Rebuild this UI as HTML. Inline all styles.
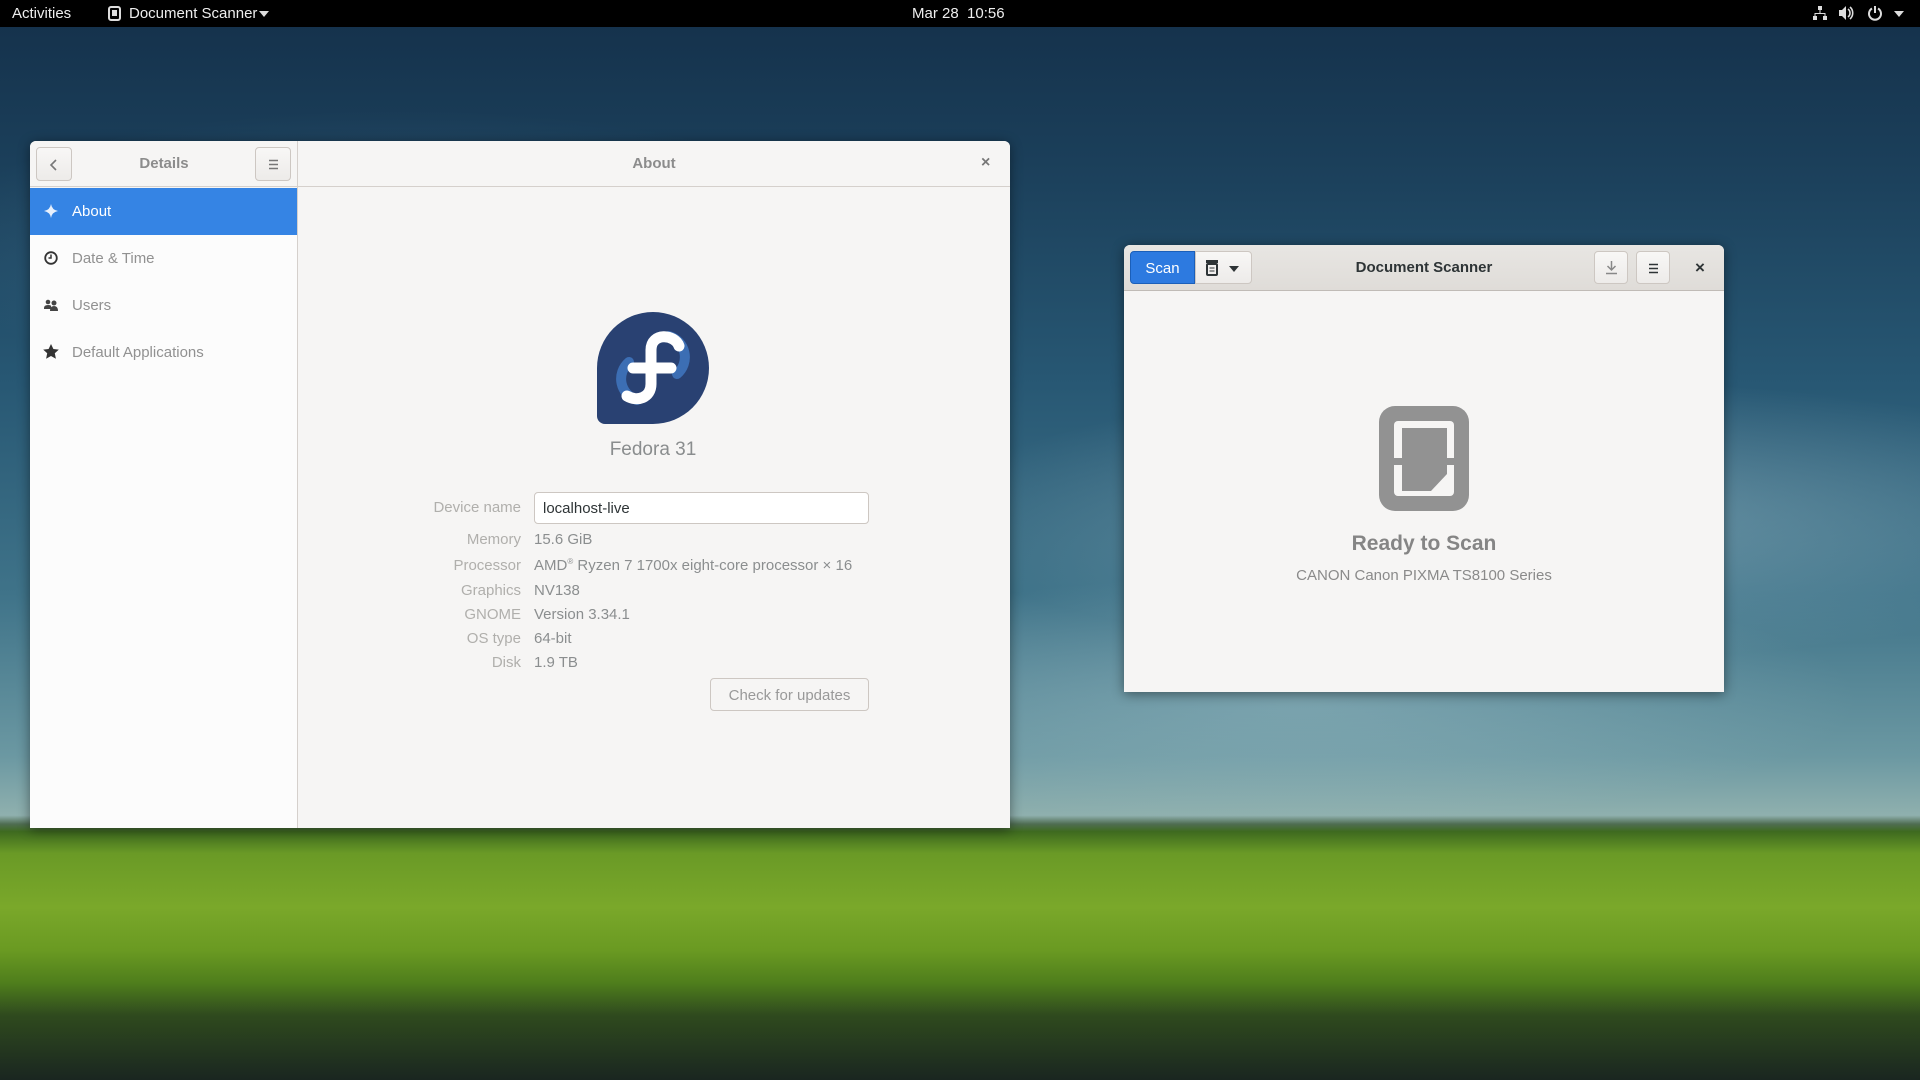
<!DOCTYPE html>
<html><head><meta charset="utf-8"><style>
*{box-sizing:border-box;margin:0;padding:0}
body{width:1920px;height:1080px;overflow:hidden;position:relative;font-family:"Liberation Sans","DejaVu Sans",sans-serif;
background:
radial-gradient(ellipse 900px 200px at 1550px 520px,rgba(200,225,230,.35),transparent 70%),
radial-gradient(ellipse 800px 180px at 1300px 700px,rgba(190,215,220,.3),transparent 70%),
radial-gradient(ellipse 700px 200px at 400px 250px,rgba(100,150,180,.25),transparent 70%),
linear-gradient(180deg,#14304a 0%,#1b3f5a 15%,#275773 35%,#3f7389 55%,#6b98a2 70%,#8fb0ae 75.5%,#4f6d52 76.3%,#3e6a1f 77%,#6a9a26 79%,#7aa82a 84%,#6a9a22 88%,#4f7e1c 91%,#2f4a1e 94%,#1a2620 100%);}
.bar{position:absolute;left:0;top:0;width:1920px;height:27px;background:#000;color:#eee;font-size:15px}
.bar span{position:absolute;top:5px}
.win{position:absolute;background:#f6f5f4;box-shadow:0 2px 12px rgba(0,0,0,.45);border-radius:6px 6px 0 0;overflow:hidden}
.btn{position:absolute;border:1px solid #cdc7c2;border-radius:4px;background:linear-gradient(#f8f7f6,#edebe9)}
.lbl{position:absolute;color:#b0afac;font-size:15px;text-align:right;width:200px;left:321px}
.val{position:absolute;color:#8b8e8f;font-size:15px;left:534px}
</style></head><body>
<div class="bar">
<span style="left:12px">Activities</span>
<svg style="position:absolute;left:108px;top:6px" width="13" height="15" viewBox="0 0 13 15"><rect x="1" y="1" width="11" height="13" rx="2" fill="none" stroke="#ddd" stroke-width="2"/><rect x="4" y="4" width="5" height="6" fill="#ddd"/></svg>
<span style="left:129px">Document Scanner</span>
<svg style="position:absolute;left:259px;top:11px" width="10" height="6"><path d="M0 0H10L5 6Z" fill="#ddd"/></svg>
<span style="left:912px">Mar 28&nbsp; 10:56</span>
<svg style="position:absolute;left:1812px;top:5px" width="16" height="16" viewBox="0 0 16 16" fill="#ddd"><rect x="6" y="1" width="4" height="4"/><rect x="1" y="11" width="4" height="4"/><rect x="11" y="11" width="4" height="4"/><path d="M7.5 5h1v3h5v3h-1V9h-9v2h-1V8h5z"/></svg>
<svg style="position:absolute;left:1838px;top:5px" width="18" height="16" viewBox="0 0 18 16" fill="#ddd"><path d="M1 5h3l4-4v14l-4-4H1z"/><path d="M10 4a5 5 0 0 1 0 8M12 2a8 8 0 0 1 0 12" stroke="#ddd" stroke-width="1.6" fill="none"/></svg>
<svg style="position:absolute;left:1867px;top:5px" width="16" height="16" viewBox="0 0 16 16"><path d="M5 3.5a6 6 0 1 0 6 0" stroke="#ddd" stroke-width="2" fill="none"/><path d="M8 1v7" stroke="#ddd" stroke-width="2"/></svg>
<svg style="position:absolute;left:1894px;top:11px" width="10" height="6"><path d="M0 0H10L5 6Z" fill="#ddd"/></svg>
</div>

<div class="win" style="left:30px;top:141px;width:980px;height:687px">
 <div style="position:absolute;left:0;top:0;width:980px;height:46px;background:#f6f5f4;border-bottom:1px solid #d5d0cc"></div>
 <div style="position:absolute;left:267px;top:0;width:1px;height:687px;background:#d5d0cc"></div>
 <div class="btn" style="left:6px;top:6px;width:36px;height:34px"><svg style="position:absolute;left:12px;top:10px" width="10" height="14"><path d="M7 2L2 7l5 5" stroke="#777" stroke-width="1.6" fill="none"/></svg></div>
 <div style="position:absolute;left:42px;width:184px;top:14px;text-align:center;font-size:15px;font-weight:bold;color:#8c8c8c">Details</div>
 <div class="btn" style="left:225px;top:6px;width:36px;height:34px"><svg style="position:absolute;left:12px;top:11px" width="11" height="11"><path d="M1 1.5h9M1 5.5h9M1 9.5h9" stroke="#777" stroke-width="1.5"/></svg></div>
 <div style="position:absolute;left:268px;width:712px;top:14px;text-align:center;font-size:15px;font-weight:bold;color:#8c8c8c">About</div>
 <div style="position:absolute;left:951px;top:13px;font-size:16px;color:#777;font-weight:bold">×</div>
 <div style="position:absolute;left:0;top:47px;width:267px;height:640px;background:#fcfcfc"></div>
 <div style="position:absolute;left:0;top:47px;width:267px;height:47px;background:#3584e4"></div>
 <svg style="position:absolute;left:14px;top:63px" width="14" height="14" viewBox="0 0 14 14"><path d="M7 0Q8 6 14 7Q8 8 7 14Q6 8 0 7Q6 6 7 0Z" fill="#e8f0fc"/></svg>
 <div style="position:absolute;left:42px;top:62px;font-size:15px;color:#fff">About</div>
 <svg style="position:absolute;left:14px;top:110px" width="14" height="14" viewBox="0 0 14 14"><circle cx="7" cy="7" r="5.8" stroke="#333" stroke-width="1.8" fill="none"/><path d="M7 3.5V7H4.5" stroke="#333" stroke-width="1.5" fill="none"/></svg>
 <div style="position:absolute;left:42px;top:109px;font-size:15px;color:#919191">Date &amp; Time</div>
 <svg style="position:absolute;left:14px;top:158px" width="15" height="12" viewBox="0 0 15 12" fill="#444"><circle cx="4" cy="3" r="2.3"/><circle cx="10" cy="4" r="2.5"/><path d="M0 9q0-3 4-3t3 2v2H0zM6 12q0-5 4-5t4 5z"/></svg>
 <div style="position:absolute;left:42px;top:156px;font-size:15px;color:#919191">Users</div>
 <svg style="position:absolute;left:13px;top:203px" width="16" height="15" viewBox="0 0 16 15"><path d="M8 0l2.4 5 5.4.6-4 3.7 1.1 5.4L8 12l-4.9 2.7 1.1-5.4-4-3.7L5.6 5z" fill="#333"/></svg>
 <div style="position:absolute;left:42px;top:203px;font-size:15px;color:#919191">Default Applications</div>
</div>

<svg style="position:absolute;left:597px;top:312px" width="112" height="112" viewBox="0 0 112 112">
 <path d="M56 0A56 56 0 0 1 112 56A56 56 0 0 1 56 112H8A8 8 0 0 1 0 104V56A56 56 0 0 1 56 0Z" fill="#294172"/>
 <path d="M72 24a22 22 0 0 1 8 38M40 88a22 22 0 0 1 -8 -38" stroke="#3c6eb4" stroke-width="10" fill="none" stroke-linecap="round"/>
 <path d="M82 34c-4-12-28-14-28 4v34c0 14-14 18-24 12M36 56h38" stroke="#fff" stroke-width="11" fill="none" stroke-linecap="round"/>
</svg>
<div style="position:absolute;left:553px;width:200px;top:439px;text-align:center;font-size:19px;color:#8a8d8e">Fedora 31</div>
<div class="lbl" style="top:499px">Device name</div>
<div style="position:absolute;left:534px;top:492px;width:335px;height:32px;background:#fff;border:1px solid #cdc7c2;border-radius:4px;padding:7px 8px;font-size:15px;color:#2e3436">localhost-live</div>
<div class="lbl" style="top:531px">Memory</div><div class="val" style="top:531px">15.6 GiB</div>
<div class="lbl" style="top:557px">Processor</div><div class="val" style="top:557px">AMD<sup style="font-size:8px">®</sup> Ryzen 7 1700x eight-core processor × 16</div>
<div class="lbl" style="top:582px">Graphics</div><div class="val" style="top:582px">NV138</div>
<div class="lbl" style="top:606px">GNOME</div><div class="val" style="top:606px">Version 3.34.1</div>
<div class="lbl" style="top:630px">OS type</div><div class="val" style="top:630px">64-bit</div>
<div class="lbl" style="top:654px">Disk</div><div class="val" style="top:654px">1.9 TB</div>
<div class="btn" style="left:710px;top:678px;width:159px;height:33px;text-align:center;padding-top:8px;font-size:15px;color:#999;background:#f6f5f4">Check for updates</div>

<div class="win" style="left:1124px;top:245px;width:600px;height:447px">
 <div style="position:absolute;left:0;top:0;width:600px;height:46px;background:linear-gradient(#e8e6e3,#dfdcd8);border-bottom:1px solid #c0bbb6"></div>
 <div style="position:absolute;left:6px;top:6px;width:65px;height:33px;background:#2d7ae0;border:1px solid #1b5fb9;border-radius:4px 0 0 4px;color:#fff;font-size:15px;text-align:center;padding-top:8px">Scan</div>
 <div class="btn" style="left:71px;top:6px;width:57px;height:33px;border-radius:0 4px 4px 0">
  <svg style="position:absolute;left:9px;top:8px" width="14" height="16" viewBox="0 0 14 16"><rect x="1" y="0" width="12" height="3" fill="#2e3436"/><rect x="2" y="4" width="10" height="11" rx="1" fill="none" stroke="#2e3436" stroke-width="2"/><path d="M4.5 8h5M4.5 11h5" stroke="#2e3436"/></svg>
  <svg style="position:absolute;left:33px;top:14px" width="10" height="6"><path d="M0 0H10L5 6Z" fill="#2e3436"/></svg>
 </div>
 <div style="position:absolute;left:0;width:600px;top:14px;text-align:center;font-size:15px;font-weight:bold;color:#2e3436">Document Scanner</div>
 <div class="btn" style="left:470px;top:6px;width:34px;height:33px"><svg style="position:absolute;left:10px;top:8px" width="13" height="15"><path d="M6.5 1v9M2.5 6l4 4 4-4M1 13.5h11" stroke="#888" stroke-width="1.5" fill="none"/></svg></div>
 <div class="btn" style="left:512px;top:6px;width:34px;height:33px"><svg style="position:absolute;left:11px;top:11px" width="11" height="11"><path d="M1 1.5h9M1 5.5h9M1 9.5h9" stroke="#2e3436" stroke-width="1.6"/></svg></div>
 <div style="position:absolute;left:571px;top:13px;font-size:17px;color:#2e3436;font-weight:bold">×</div>
 <svg style="position:absolute;left:255px;top:161px" width="90" height="105" viewBox="0 0 90 105">
  <rect x="0" y="0" width="90" height="105" rx="16" fill="#929292"/>
  <rect x="15" y="15" width="60" height="75" rx="4" fill="#f6f5f4"/>
  <path d="M23 22H68V85H40L23 85Z" fill="#929292"/>
  <path d="M68 68L52 85H68Z" fill="#f6f5f4"/>
  <rect x="8" y="52" width="74" height="7" fill="#929292"/>
 </svg>
 <div style="position:absolute;left:0;width:600px;top:287px;text-align:center;font-size:21px;font-weight:bold;color:#858585">Ready to Scan</div>
 <div style="position:absolute;left:0;width:600px;top:322px;text-align:center;font-size:15px;color:#8a8a8a">CANON Canon PIXMA TS8100 Series</div>
</div>
</body></html>
